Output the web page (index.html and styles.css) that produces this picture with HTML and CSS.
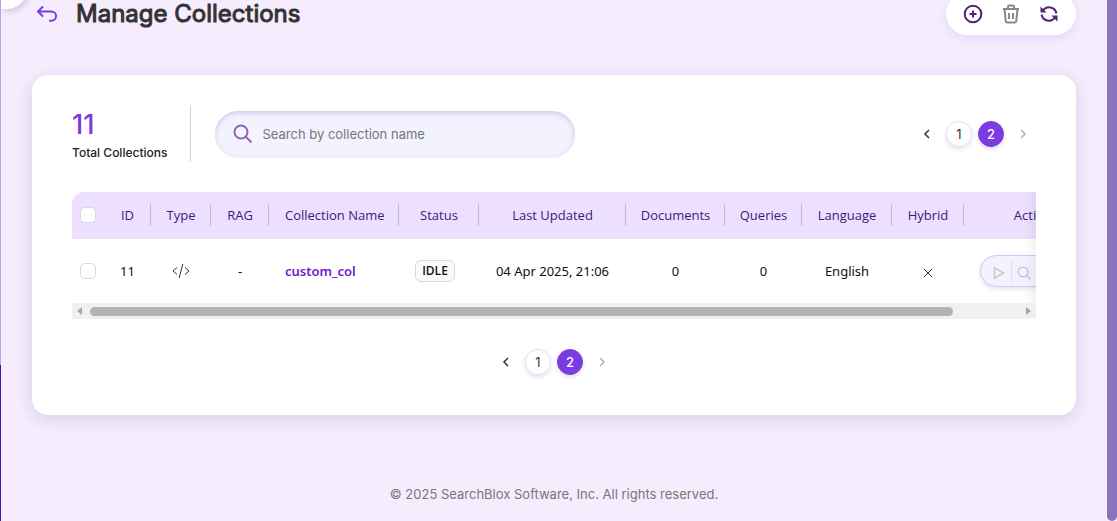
FILE: index.html
```html
<!DOCTYPE html>
<html lang="en">
<head>
    <meta charset="UTF-8">
    <meta name="viewport" content="width=device-width, initial-scale=1.0">
    <title>Manage Collections</title>
    <link rel="stylesheet" href="styles.css">
</head>
<body>
    <div class="side-edge"></div>
    <div class="side-toggle"></div>
    <main class="content">
        <header class="page-header">
            <a class="back" href="#" aria-label="Back">
                <svg width="22" height="18" viewBox="0 0 22 18"><path d="M6.500 2 2 6.500l4.500 4.500M2 6.500h13.500a4.600 4.600 0 0 1 0 9.200h-1.500"/></svg>
            </a>
            <h1>Manage Collections</h1>
            <div class="toolbar">
                <button type="button" aria-label="Add collection">
                    <svg width="20" height="20" viewBox="0 0 20 20"><circle cx="10" cy="10" r="8.300"/><path d="M10 6.500v7M6.500 10h7"/></svg>
                </button>
                <button type="button" class="muted" aria-label="Delete">
                    <svg width="20" height="20" viewBox="0 0 20 20"><path d="M2 5h16M3.500 5l1.300 12.300q.2 1.200 1.400 1.200h7.600q1.200 0 1.400-1.200L16.500 5M7 5V2.500Q7 1.500 8 1.500h4q1 0 1 1V5M8 9v6M12 9v6"/></svg>
                </button>
                <button type="button" aria-label="Refresh">
                    <svg width="20" height="20" viewBox="0 0 20 20"><path d="M4 6.500A7.400 7.400 0 0 1 17.400 9.500M16 13.500A7.400 7.400 0 0 1 2.600 10.500"/><path class="solid" d="M1.500 2.500v6h6zM18.500 17.500v-6h-6z"/></svg>
                </button>
            </div>
        </header>

        <section class="card">
            <div class="card-top">
                <div class="total">
                    <strong>11</strong>
                    <span>Total Collections</span>
                </div>
                <label class="search">
                    <svg width="20" height="20" viewBox="0 0 20 20"><circle cx="8" cy="8" r="6.500"/><path d="m12.800 12.800 5.700 5.700"/></svg>
                    <input type="text" placeholder="Search by collection name" aria-label="Search by collection name">
                </label>
                <nav class="pager" aria-label="Pages">
                    <button type="button" class="arrow" aria-label="Previous"><svg width="8" height="10" viewBox="0 0 8 10"><path d="M6 1 2 5l4 4"/></svg></button>
                    <button type="button" class="page">1</button>
                    <button type="button" class="page current">2</button>
                    <button type="button" class="arrow" aria-label="Next" disabled><svg width="8" height="10" viewBox="0 0 8 10"><path d="m2 1 4 4-4 4"/></svg></button>
                </nav>
            </div>

            <div class="table-box">
                <table>
                    <colgroup>
                        <col class="w-check"><col class="w-id"><col class="w-type"><col class="w-rag"><col class="w-name"><col class="w-status"><col class="w-date"><col class="w-docs"><col class="w-queries"><col class="w-lang"><col class="w-hybrid"><col class="w-actions">
                    </colgroup>
                    <thead>
                        <tr>
                            <th class="check"><input type="checkbox" aria-label="Select all"></th>
                            <th>ID</th>
                            <th>Type</th>
                            <th>RAG</th>
                            <th class="name">Collection Name</th>
                            <th>Status</th>
                            <th>Last Updated</th>
                            <th>Documents</th>
                            <th>Queries</th>
                            <th>Language</th>
                            <th>Hybrid</th>
                            <th>Actions</th>
                        </tr>
                    </thead>
                    <tbody>
                        <tr>
                            <td class="check"><input type="checkbox" aria-label="Select custom_col"></td>
                            <td>11</td>
                            <td><svg class="code" width="18" height="16" viewBox="0 0 18 16"><path d="M5 4.500 1 8l4 3.500M13 4.500 17 8l-4 3.500M10.800 1 7.200 15"/></svg></td>
                            <td>-</td>
                            <td class="name"><a href="#">custom_col</a></td>
                            <td><span class="badge">IDLE</span></td>
                            <td>04 Apr 2025, 21:06</td>
                            <td>0</td>
                            <td>0</td>
                            <td>English</td>
                            <td><svg class="cross" width="8" height="8" viewBox="0 0 8 8"><path d="m0 0 8 8M8 0 0 8"/></svg></td>
                            <td>
                                <div class="actions">
                                    <button type="button" aria-label="Run" disabled><svg width="12" height="14" viewBox="0 0 12 14"><path d="M1.500 1.800v10.400L10.500 7z"/></svg></button>
                                    <button type="button" aria-label="Search" disabled><svg width="14" height="14" viewBox="0 0 14 14"><circle cx="6" cy="6" r="4.800"/><path d="m9.500 9.500 4 4"/></svg></button>
                                    <button type="button" aria-label="Settings" disabled></button>
                                </div>
                            </td>
                        </tr>
                    </tbody>
                </table>
            </div>
            <div class="scrollbar">
                <svg width="5" height="8" viewBox="0 0 5 8"><path d="M5 0v8L0 4z"/></svg>
                <div class="track"><div class="thumb"></div></div>
                <svg width="5" height="8" viewBox="0 0 5 8"><path d="M0 0v8l5-4z"/></svg>
            </div>

            <nav class="pager bottom" aria-label="Pages">
                <button type="button" class="arrow" aria-label="Previous"><svg width="8" height="10" viewBox="0 0 8 10"><path d="M6 1 2 5l4 4"/></svg></button>
                <button type="button" class="page">1</button>
                <button type="button" class="page current">2</button>
                <button type="button" class="arrow" aria-label="Next" disabled><svg width="8" height="10" viewBox="0 0 8 10"><path d="m2 1 4 4-4 4"/></svg></button>
            </nav>
        </section>

        <footer>© 2025 SearchBlox Software, Inc. All rights reserved.</footer>
    </main>
    <div class="page-scroll"></div>
</body>
</html>
```
FILE: styles.css
```css
* {
    box-sizing: border-box;
}

body {
    margin: 0;
    height: 100vh;
    display: flex;
    overflow: hidden;
    background-color: #f5ecfe;
    font-family: Inter, sans-serif;
    color: #333;
}

button {
    padding: 0;
    border: 0;
    background: none;
    color: inherit;
    font-family: inherit;
    display: flex;
    align-items: center;
    justify-content: center;
}

svg {
    display: block;
    fill: none;
    stroke: currentColor;
    stroke-width: 2;
}

.side-edge {
    width: 1px;
    background: linear-gradient(#b9a5e3 70%, #4b0f9b 70%);
}

.side-toggle {
    position: absolute;
    left: 1px;
    top: -31px;
    width: 26px;
    height: 40px;
    border-radius: 0 0 20px 0;
    background-color: white;
    box-shadow: 2px 2px 6px rgba(60, 30, 100, 0.2);
}

.page-scroll {
    width: 10px;
    border-radius: 0 0 5px 5px;
    background-color: #8b74bd;
}

.content {
    flex: 1;
    min-width: 0;
    padding: 0 31px;
}

.page-header {
    display: flex;
    align-items: center;
    height: 42px;
    margin-top: -7px;
    margin-bottom: 40px;
}

.back {
    margin: 0 18px 0 4px;
    color: #7a3be0;
}

.back svg {
    stroke-linecap: round;
    stroke-linejoin: round;
}

h1 {
    margin: 0;
    font-size: 24px;
    line-height: 32px;
    font-weight: 400;
    -webkit-text-stroke: 1px;
}

.toolbar {
    margin-left: auto;
    height: 42px;
    width: 130px;
    padding: 0 17px;
    display: flex;
    align-items: center;
    justify-content: space-between;
    border-radius: 21px;
    background-color: white;
    box-shadow: 0 3px 10px rgba(90, 40, 150, 0.1);
    color: #512277;
}

.toolbar .muted {
    color: #888;
}

.toolbar .solid {
    fill: currentColor;
    stroke: none;
}

.card {
    padding: 30px 40px 40px;
    border-radius: 16px;
    background-color: white;
    box-shadow: 0 4px 16px rgba(70, 30, 90, 0.15);
}

.card-top {
    display: flex;
    align-items: center;
    margin-bottom: 30px;
}

.total {
    height: 57px;
    padding-right: 23px;
    margin-right: 24px;
    border-right: 1px solid #d9c9e2;
}

.total strong {
    display: block;
    color: #7a3be0;
    font-size: 27px;
    line-height: 40px;
    font-weight: 500;
}

.total span {
    display: block;
    font-size: 12px;
    line-height: 16px;
    font-weight: 500;
    color: #222;
}

.search {
    width: 360px;
    height: 46px;
    padding: 0 18px;
    display: flex;
    align-items: center;
    gap: 9px;
    border-radius: 23px;
    background-color: #f3f2ff;
    box-shadow: inset 0 2px 5px rgba(80, 60, 140, 0.22), 0 1px 2px rgba(0, 0, 0, 0.06);
    color: #9263b4;
}

.search input {
    flex: 1;
    padding: 0;
    border: 0;
    outline: 0;
    background: none;
    font-family: inherit;
    font-size: 13px;
}

.search input::placeholder {
    color: #777;
}

.pager {
    display: flex;
    gap: 6px;
    margin-left: auto;
}

.pager.bottom {
    margin: 30px 0 0;
    justify-content: center;
}

.pager button {
    width: 26px;
    height: 26px;
    border-radius: 50%;
    font-size: 13px;
    color: #333;
}

.pager .page {
    border: 1px solid #e4dcfb;
    box-shadow: 0 2px 4px rgba(60, 30, 120, 0.15);
}

.pager .current {
    border-color: #7a3be0;
    background-color: #7a3be0;
    color: white;
    font-weight: 500;
}

.pager svg {
    stroke-width: 1.5;
}

.pager button:disabled {
    color: #b0b0b0;
}

.table-box {
    overflow: hidden;
    border-radius: 12px 0 0 0;
    position: relative;
}

/* fade over the cut edge of the table */
.table-box::after {
    content: "";
    position: absolute;
    top: 0;
    right: 0;
    bottom: 0;
    width: 12px;
    background: linear-gradient(to right, rgba(0, 0, 0, 0), rgba(0, 0, 0, 0.05));
}

table {
    width: 1036px;
    table-layout: fixed;
    border-collapse: separate;
    border-spacing: 0;
    font-family: "Noto Sans", sans-serif;
    font-size: 13px;
}

.w-check { width: 32px; }
.w-id { width: 47px; }
.w-type { width: 60px; }
.w-rag { width: 58px; }
.w-name { width: 130px; }
.w-status { width: 80px; }
.w-date { width: 147px; }
.w-docs { width: 99px; }
.w-queries { width: 77px; }
.w-lang { width: 90px; }
.w-hybrid { width: 72px; }
.w-actions { width: 144px; }

th {
    height: 47px;
    padding: 0;
    background: linear-gradient(#c3b5d6, #c3b5d6) right center / 1px 22px no-repeat #eddfff;
    border-bottom: 1px solid #ebe6f0;
    color: #3d1a78;
    font-family: "Open Sans", sans-serif;
    font-weight: 500;
    white-space: nowrap;
}

th.check,
th:last-child {
    background-image: none;
}

td {
    height: 64px;
    padding: 0;
    text-align: center;
    color: #111;
    white-space: nowrap;
}

.name {
    padding-left: 16px;
    text-align: left;
}

.name a {
    color: #6a20c8;
    font-weight: 600;
    text-decoration: none;
}

.check input {
    appearance: none;
    display: block;
    width: 16px;
    height: 16px;
    margin: 0 auto;
    border: 1px solid #d9d9d9;
    border-radius: 5px;
    background-color: white;
}

.code {
    margin: 0 auto;
    stroke-width: 1;
    color: #333;
}

.cross {
    margin: 4px auto 0;
    stroke-width: 1;
    color: #333;
}

.badge {
    display: inline-block;
    margin-right: 8px;
    padding: 0 6px;
    border: 1px solid #d9d9d9;
    border-radius: 6px;
    background-color: #fafafa;
    font-family: "Open Sans", sans-serif;
    font-size: 12px;
    line-height: 20px;
    font-weight: 600;
}

.actions {
    display: flex;
    align-items: center;
    width: 116px;
    height: 32px;
    margin-left: 16px;
    padding-left: 6px;
    border: 1px solid #d9c4fa;
    border-radius: 16px;
    background-color: #f3f2ff;
    box-shadow: 0 2px 4px rgba(60, 30, 120, 0.12);
}

.actions button {
    width: 25px;
    height: 22px;
    padding-top: 4px;
    border-right: 1px solid #e2d8f8;
    color: #c8c8cc;
}

.actions svg {
    stroke-width: 1.5;
}

.scrollbar {
    display: flex;
    align-items: center;
    gap: 8px;
    height: 16px;
    padding: 0 5px;
    background-color: #f0f0f0;
}

.scrollbar svg {
    fill: #a6a6a6;
    stroke: none;
}

.track {
    flex: 1;
}

.thumb {
    width: 93%;
    height: 9px;
    border-radius: 5px;
    background-color: #b3b3b3;
}

footer {
    margin-top: 69px;
    text-align: center;
    font-size: 13px;
    line-height: 20px;
    color: #777;
}
```
